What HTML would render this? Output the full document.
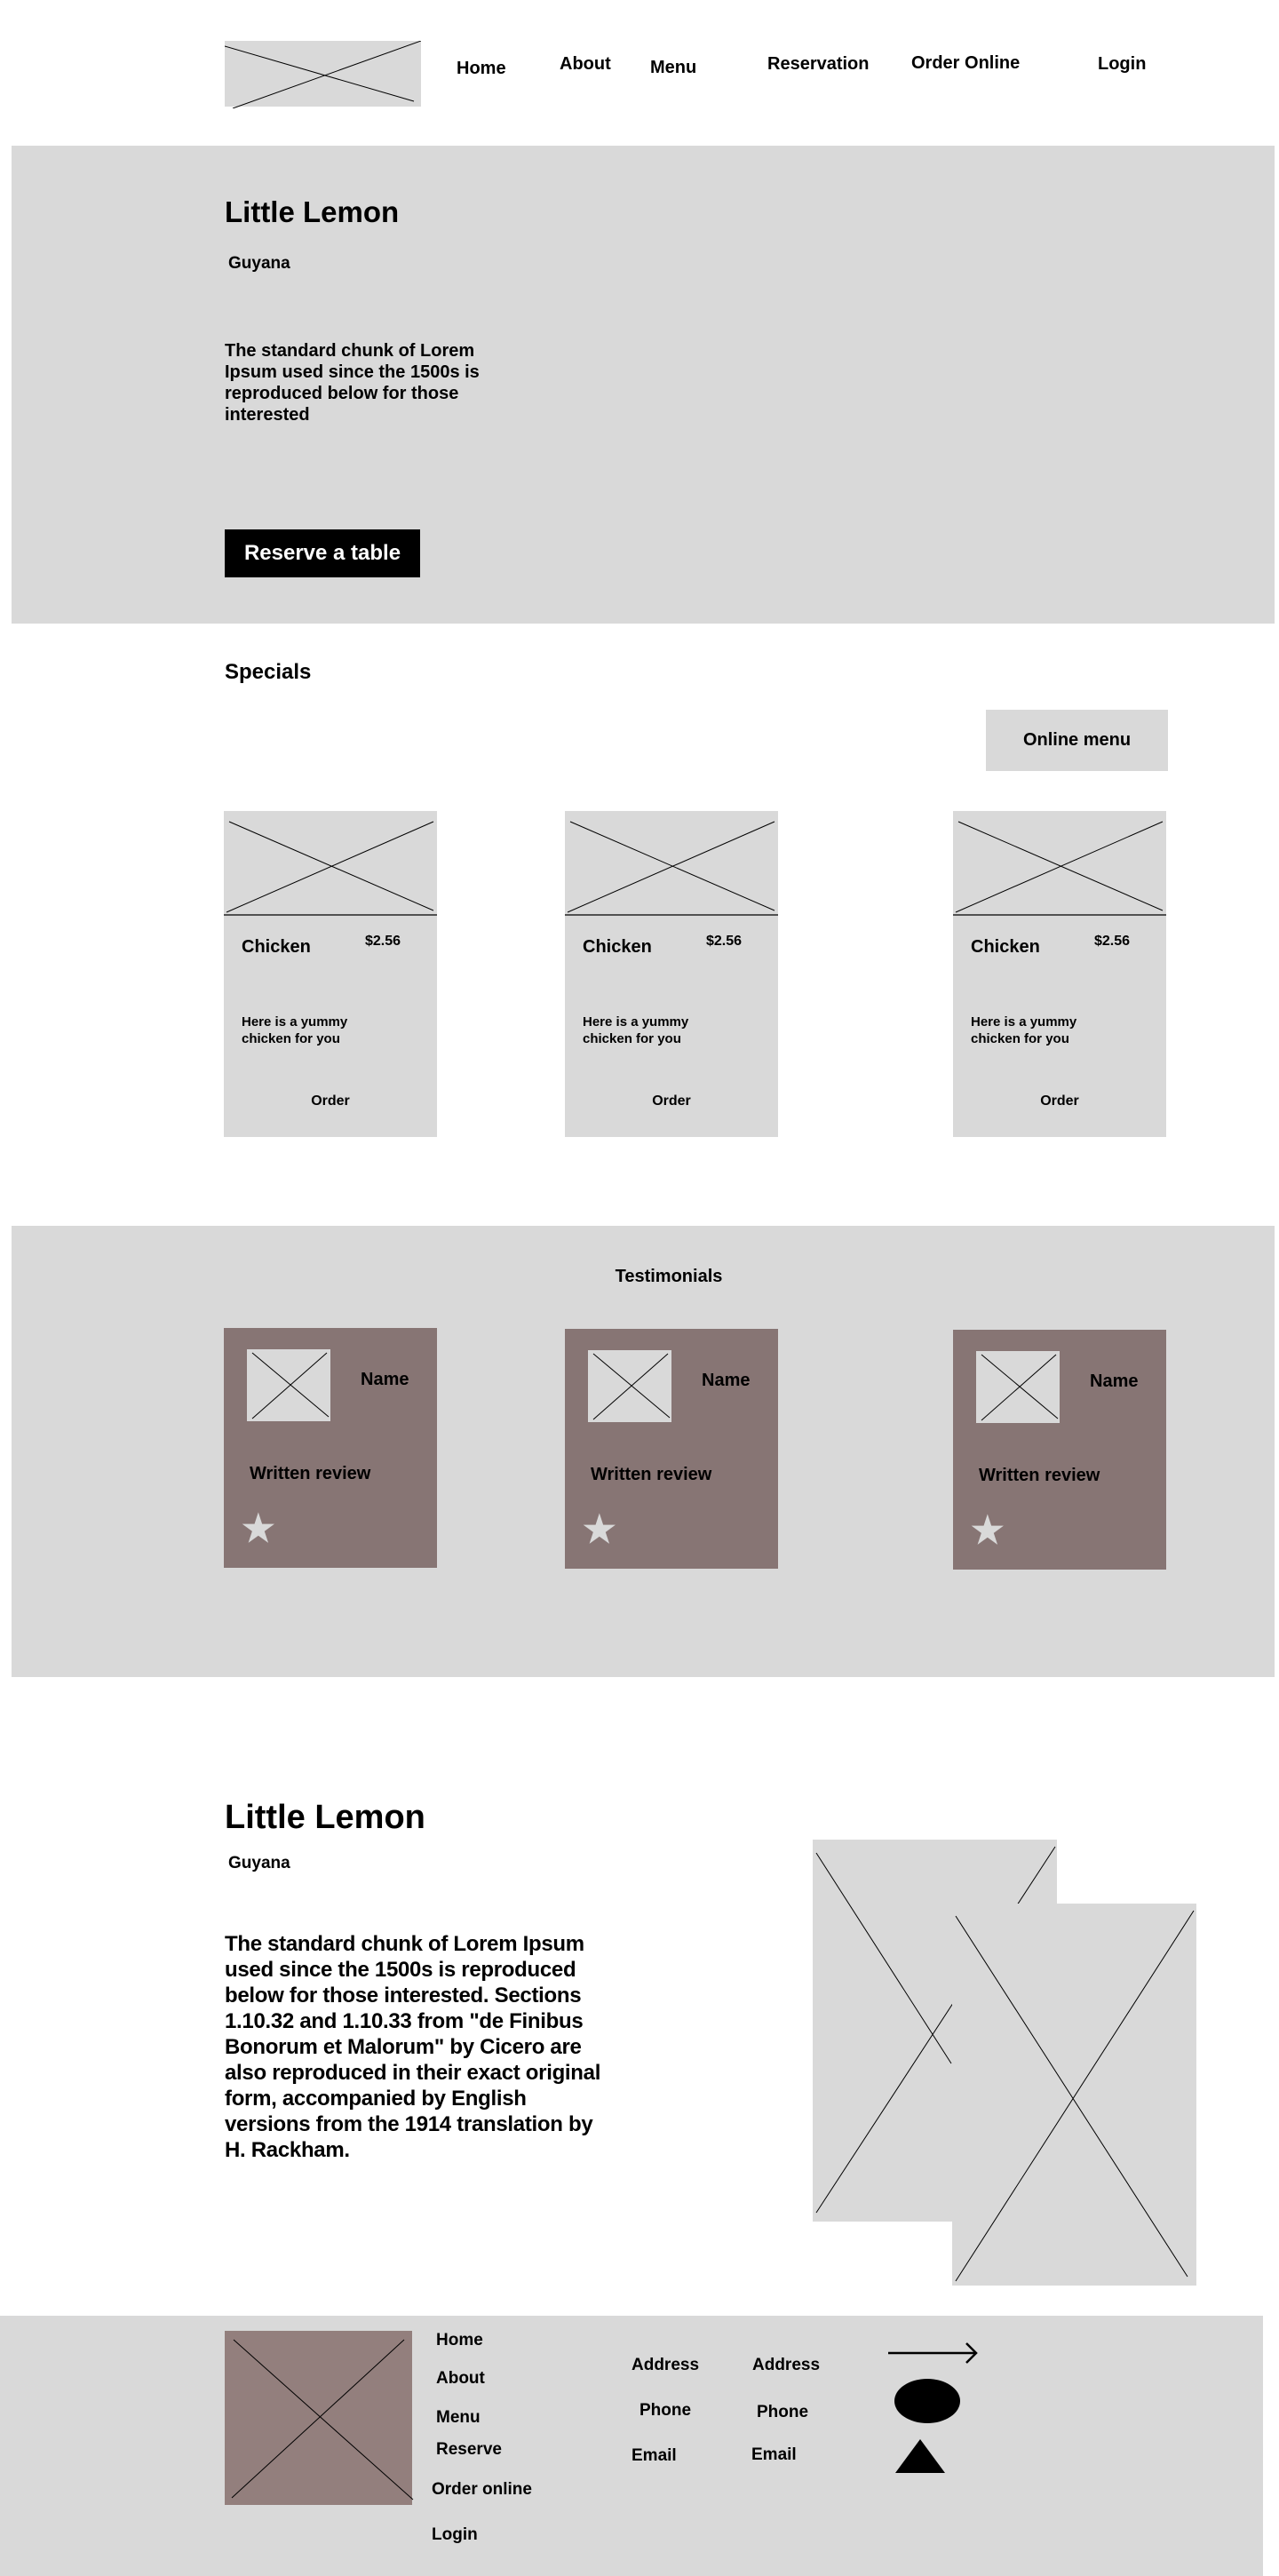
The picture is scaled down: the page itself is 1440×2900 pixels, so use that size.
<!DOCTYPE html>
<html><head><meta charset="utf-8"><style>
*{margin:0;padding:0;box-sizing:border-box}
body{width:1440px;height:2900px;position:relative;background:#fff;font-family:"Liberation Sans",Arial,sans-serif;font-weight:bold;color:#000;overflow:hidden}
.a{position:absolute;white-space:nowrap;line-height:1}
.b{position:absolute}
svg{position:absolute;display:block}
</style></head><body>

<!-- header -->
<svg style="left:253px;top:46px" width="221" height="76"><rect width="221" height="74" fill="#d9d9d9"/><line x1="0" y1="6" x2="213" y2="68" stroke="#000" stroke-width="1"/><line x1="221" y1="0" x2="9" y2="76" stroke="#000" stroke-width="1"/></svg>
<div class="a" style="left:514px;top:67px;font-size:20px">Home</div>
<div class="a" style="left:630px;top:62px;font-size:20px">About</div>
<div class="a" style="left:732px;top:66px;font-size:20px">Menu</div>
<div class="a" style="left:864px;top:62px;font-size:20px">Reservation</div>
<div class="a" style="left:1026px;top:61px;font-size:20px">Order Online</div>
<div class="a" style="left:1236px;top:62px;font-size:20px">Login</div>

<!-- hero -->
<div class="b" style="left:13px;top:164px;width:1422px;height:538px;background:#d9d9d9"></div>
<div class="a" style="left:253px;top:222px;font-size:33px">Little Lemon</div>
<div class="a" style="left:257px;top:287px;font-size:19px">Guyana</div>
<div class="b" style="left:253px;top:383px;width:310px;font-size:20px;line-height:24px">The standard chunk of Lorem Ipsum used since the 1500s is reproduced below for those interested</div>
<div class="b" style="left:253px;top:596px;width:220px;height:54px;background:#000;color:#fff;font-size:24px;line-height:54px;text-align:center">Reserve a table</div>

<!-- specials -->
<div class="a" style="left:253px;top:745px;font-size:24px">Specials</div>
<div class="b" style="left:1110px;top:799px;width:205px;height:69px;background:#d9d9d9;font-size:20px;line-height:69px;text-align:center">Online menu</div>

<div class="b" style="left:252px;top:913px;width:240px;height:367px;background:#d9d9d9"><svg width="240" height="118"><line x1="6" y1="12" x2="236" y2="112" stroke="#000"/><line x1="236" y1="12" x2="3" y2="114" stroke="#000"/><line x1="0" y1="117" x2="240" y2="117" stroke="#000" stroke-width="1.3"/></svg>
<div class="a" style="left:20px;top:143px;font-size:20px">Chicken</div>
<div class="a" style="left:159px;top:139px;font-size:16px">$2.56</div>
<div class="b" style="left:20px;top:228px;font-size:15px;line-height:19px">Here is a yummy<br>chicken for you</div>
<div class="a" style="left:0;width:240px;text-align:center;top:319px;font-size:16px">Order</div></div>

<div class="b" style="left:636px;top:913px;width:240px;height:367px;background:#d9d9d9"><svg width="240" height="118"><line x1="6" y1="12" x2="236" y2="112" stroke="#000"/><line x1="236" y1="12" x2="3" y2="114" stroke="#000"/><line x1="0" y1="117" x2="240" y2="117" stroke="#000" stroke-width="1.3"/></svg>
<div class="a" style="left:20px;top:143px;font-size:20px">Chicken</div>
<div class="a" style="left:159px;top:139px;font-size:16px">$2.56</div>
<div class="b" style="left:20px;top:228px;font-size:15px;line-height:19px">Here is a yummy<br>chicken for you</div>
<div class="a" style="left:0;width:240px;text-align:center;top:319px;font-size:16px">Order</div></div>

<div class="b" style="left:1073px;top:913px;width:240px;height:367px;background:#d9d9d9"><svg width="240" height="118"><line x1="6" y1="12" x2="236" y2="112" stroke="#000"/><line x1="236" y1="12" x2="3" y2="114" stroke="#000"/><line x1="0" y1="117" x2="240" y2="117" stroke="#000" stroke-width="1.3"/></svg>
<div class="a" style="left:20px;top:143px;font-size:20px">Chicken</div>
<div class="a" style="left:159px;top:139px;font-size:16px">$2.56</div>
<div class="b" style="left:20px;top:228px;font-size:15px;line-height:19px">Here is a yummy<br>chicken for you</div>
<div class="a" style="left:0;width:240px;text-align:center;top:319px;font-size:16px">Order</div></div>

<!-- testimonials -->
<div class="b" style="left:13px;top:1380px;width:1422px;height:508px;background:#d9d9d9"></div>
<div class="a" style="left:0;width:1506px;text-align:center;top:1427px;font-size:20px">Testimonials</div>

<div class="b" style="left:252px;top:1495px;width:240px;height:270px;background:#877574">
<svg style="left:26px;top:24px" width="94" height="81"><rect width="94" height="81" fill="#d9d9d9"/><line x1="6" y1="4" x2="92" y2="76" stroke="#000"/><line x1="90" y1="4" x2="6" y2="78" stroke="#000"/></svg>
<div class="a" style="left:154px;top:48px;font-size:20px">Name</div>
<div class="a" style="left:29px;top:154px;font-size:20px">Written review</div>
<div class="a" style="left:20px;top:205px;font-size:42px;color:#d9d9d9">★</div></div>

<div class="b" style="left:636px;top:1496px;width:240px;height:270px;background:#877574">
<svg style="left:26px;top:24px" width="94" height="81"><rect width="94" height="81" fill="#d9d9d9"/><line x1="6" y1="4" x2="92" y2="76" stroke="#000"/><line x1="90" y1="4" x2="6" y2="78" stroke="#000"/></svg>
<div class="a" style="left:154px;top:48px;font-size:20px">Name</div>
<div class="a" style="left:29px;top:154px;font-size:20px">Written review</div>
<div class="a" style="left:20px;top:205px;font-size:42px;color:#d9d9d9">★</div></div>

<div class="b" style="left:1073px;top:1497px;width:240px;height:270px;background:#877574">
<svg style="left:26px;top:24px" width="94" height="81"><rect width="94" height="81" fill="#d9d9d9"/><line x1="6" y1="4" x2="92" y2="76" stroke="#000"/><line x1="90" y1="4" x2="6" y2="78" stroke="#000"/></svg>
<div class="a" style="left:154px;top:48px;font-size:20px">Name</div>
<div class="a" style="left:29px;top:154px;font-size:20px">Written review</div>
<div class="a" style="left:20px;top:205px;font-size:42px;color:#d9d9d9">★</div></div>

<!-- about -->
<div class="a" style="left:253px;top:2027px;font-size:38px">Little Lemon</div>
<div class="a" style="left:257px;top:2088px;font-size:19px">Guyana</div>
<div class="b" style="left:253px;top:2174px;width:480px;font-size:24px;line-height:29px;letter-spacing:-0.3px;white-space:nowrap">The standard chunk of Lorem Ipsum<br>used since the 1500s is reproduced<br>below for those interested. Sections<br>1.10.32 and 1.10.33 from "de Finibus<br>Bonorum et Malorum" by Cicero are<br>also reproduced in their exact original<br>form, accompanied by English<br>versions from the 1914 translation by<br>H. Rackham.</div>

<svg style="left:915px;top:2071px" width="275" height="430"><rect width="275" height="430" fill="#d9d9d9"/><line x1="4" y1="15" x2="156" y2="252" stroke="#000"/><line x1="273" y1="8" x2="4" y2="420" stroke="#000"/></svg>
<svg style="left:1072px;top:2143px" width="275" height="430"><rect width="275" height="430" fill="#d9d9d9"/><line x1="4" y1="14" x2="265" y2="420" stroke="#000"/><line x1="272" y1="8" x2="4" y2="425" stroke="#000"/></svg>

<!-- footer -->
<div class="b" style="left:0;top:2607px;width:1422px;height:293px;background:#d9d9d9"></div>
<svg style="left:253px;top:2624px" width="213" height="196"><rect width="211" height="196" fill="#937f7d"/><line x1="10" y1="10" x2="212" y2="190" stroke="#000"/><line x1="202" y1="10" x2="8" y2="188" stroke="#000"/></svg>
<div class="a" style="left:491px;top:2625px;font-size:19px">Home</div>
<div class="a" style="left:491px;top:2668px;font-size:19px">About</div>
<div class="a" style="left:491px;top:2712px;font-size:19px">Menu</div>
<div class="a" style="left:491px;top:2748px;font-size:19px">Reserve</div>
<div class="a" style="left:486px;top:2793px;font-size:19px">Order online</div>
<div class="a" style="left:486px;top:2844px;font-size:19px">Login</div>
<div class="a" style="left:711px;top:2653px;font-size:19px">Address</div>
<div class="a" style="left:847px;top:2653px;font-size:19px">Address</div>
<div class="a" style="left:720px;top:2704px;font-size:19px">Phone</div>
<div class="a" style="left:852px;top:2706px;font-size:19px">Phone</div>
<div class="a" style="left:711px;top:2755px;font-size:19px">Email</div>
<div class="a" style="left:846px;top:2754px;font-size:19px">Email</div>
<svg style="left:995px;top:2630px" width="120" height="165">
<line x1="5" y1="19" x2="104" y2="19" stroke="#000" stroke-width="2.5"/>
<polyline points="93,8 104,19 93,30" fill="none" stroke="#000" stroke-width="2.5"/>
<ellipse cx="49" cy="73" rx="37" ry="25" fill="#000"/>
<polygon points="41,116 69,154 13,154" fill="#000"/>
</svg>
</body></html>
